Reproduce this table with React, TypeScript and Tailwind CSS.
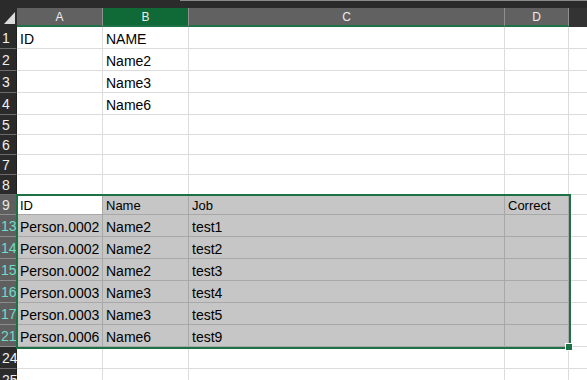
import React from 'react';

const cols = [
  { key: 'A', w: 'w-[86px]' },
  { key: 'B', w: 'w-[86px]' },
  { key: 'C', w: 'w-[316px]' },
  { key: 'D', w: 'w-[64px]' },
];

type Row = { n: string; h: string; cells: string[] };

const topRows: Row[] = [
  { n: '1', h: 'h-[22px]', cells: ['ID', 'NAME', '', ''] },
  { n: '2', h: 'h-[22px]', cells: ['', 'Name2', '', ''] },
  { n: '3', h: 'h-[22px]', cells: ['', 'Name3', '', ''] },
  { n: '4', h: 'h-[22px]', cells: ['', 'Name6', '', ''] },
  { n: '5', h: 'h-[20px]', cells: ['', '', '', ''] },
  { n: '6', h: 'h-[20px]', cells: ['', '', '', ''] },
  { n: '7', h: 'h-[20px]', cells: ['', '', '', ''] },
  { n: '8', h: 'h-[20px]', cells: ['', '', '', ''] },
];

const tableRows: Row[] = [
  { n: '13', h: 'h-[22px]', cells: ['Person.0002', 'Name2', 'test1', ''] },
  { n: '14', h: 'h-[22px]', cells: ['Person.0002', 'Name2', 'test2', ''] },
  { n: '15', h: 'h-[22px]', cells: ['Person.0002', 'Name2', 'test3', ''] },
  { n: '16', h: 'h-[22px]', cells: ['Person.0003', 'Name3', 'test4', ''] },
  { n: '17', h: 'h-[22px]', cells: ['Person.0003', 'Name3', 'test5', ''] },
  { n: '21', h: 'h-[22px]', cells: ['Person.0006', 'Name6', 'test9', ''] },
];

const bottomRows: Row[] = [
  { n: '24', h: 'h-[22px]', cells: ['', '', '', ''] },
  { n: '25', h: 'h-[22px]', cells: ['', '', '', ''] },
];

function PlainRow({ row }: { row: Row }) {
  return (
    <div className={`flex ${row.h}`}>
      <div className="w-[17px] shrink-0 bg-[#2b2b2b] border-b border-[#6b6b6b] border-r border-r-[#1f1f1f] text-[#f0f0f0] text-[14px] leading-none pl-[2px] flex items-center">
        {row.n}
      </div>
      {cols.map((c, i) => (
        <div
          key={c.key}
          className={`${c.w} shrink-0 border-r border-b border-[#dcdcdc] text-[14px] leading-[16px] text-black pl-[3px] flex items-end pb-[1px] whitespace-nowrap`}
        >
          {row.cells[i]}
        </div>
      ))}
      <div className="flex-1 border-b border-[#dcdcdc]" />
    </div>
  );
}

function TableRow({ row }: { row: Row }) {
  return (
    <div className={`flex ${row.h}`}>
      <div className="w-[17px] shrink-0 bg-[#5f5f5f] border-b border-[#8c8c8c] text-[#6fdccb] text-[14px] leading-none pl-[1px] flex items-center">
        {row.n}
      </div>
      {cols.map((c, i) => (
        <div
          key={c.key}
          className={`${c.w} shrink-0 bg-[#c6c6c6] border-r border-b border-[#a8a8a8] text-[14px] leading-[16px] text-black pl-[3px] flex items-end pb-[1px] whitespace-nowrap`}
        >
          {row.cells[i]}
        </div>
      ))}
      <div className="flex-1 border-b border-[#dcdcdc]" />
    </div>
  );
}

export default function App() {
  const header = ['ID', 'Name', 'Job', 'Correct'];
  return (
    <div
      className="w-[587px] h-[380px] overflow-hidden bg-white"
      style={{ fontFamily: '"Liberation Sans", Arial, sans-serif' }}
    >
      {/* top strip, edge of the formula bar above */}
      <div className="h-[8px] bg-[#2b2b2b] flex">
        <div className="w-[180px]" />
        <div className="flex-1 h-[1px] bg-[#8a8a8a]" />
      </div>

      {/* column headers */}
      <div className="flex h-[19px] bg-[#333333]">
        <div className="w-[17px] shrink-0 bg-[#2b2b2b] relative">
          <svg className="absolute left-[4px] top-[4px]" width="11" height="12" viewBox="0 0 11 12">
            <polygon points="11,0 11,12 0,12" fill="#dcdcdc" />
          </svg>
        </div>
        {cols.map((c) => (
          <div
            key={c.key}
            className={`${c.w} shrink-0 flex items-center justify-center text-[12px] text-[#ececec] border-r border-[#8f8f8f] border-b-2 border-b-[#1e7145] ${
              c.key === 'B' ? 'bg-[#0f6a37]' : 'bg-[#616161]'
            }`}
          >
            {c.key}
          </div>
        ))}
        <div className="flex-1" />
      </div>

      {topRows.map((r) => (
        <PlainRow key={r.n} row={r} />
      ))}

      {/* selected table block */}
      <div className="relative">
        <div className="flex h-[20px]">
          <div className="w-[17px] shrink-0 bg-[#5f5f5f] border-b border-[#8c8c8c] text-[#e8e8e8] text-[14px] leading-none pl-[2px] flex items-center">
            9
          </div>
          {cols.map((c, i) => (
            <div
              key={c.key}
              className={`${c.w} shrink-0 border-r border-b border-[#a8a8a8] text-[13px] leading-[15px] text-black pl-[3px] flex items-end pb-[1px] whitespace-nowrap ${
                i === 0 ? 'bg-white' : 'bg-[#c6c6c6]'
              }`}
            >
              {header[i]}
            </div>
          ))}
          <div className="flex-1 border-b border-[#dcdcdc]" />
        </div>
        {tableRows.map((r) => (
          <TableRow key={r.n} row={r} />
        ))}
        <div className="absolute left-[16px] top-[-1px] w-[555px] h-[155px] border-2 border-[#1e7145] pointer-events-none" />
        <div className="absolute left-[565px] top-[148px] w-[8px] h-[8px] bg-[#1e7145] border border-white" />
      </div>

      {bottomRows.map((r) => (
        <PlainRow key={r.n} row={r} />
      ))}
    </div>
  );
}
